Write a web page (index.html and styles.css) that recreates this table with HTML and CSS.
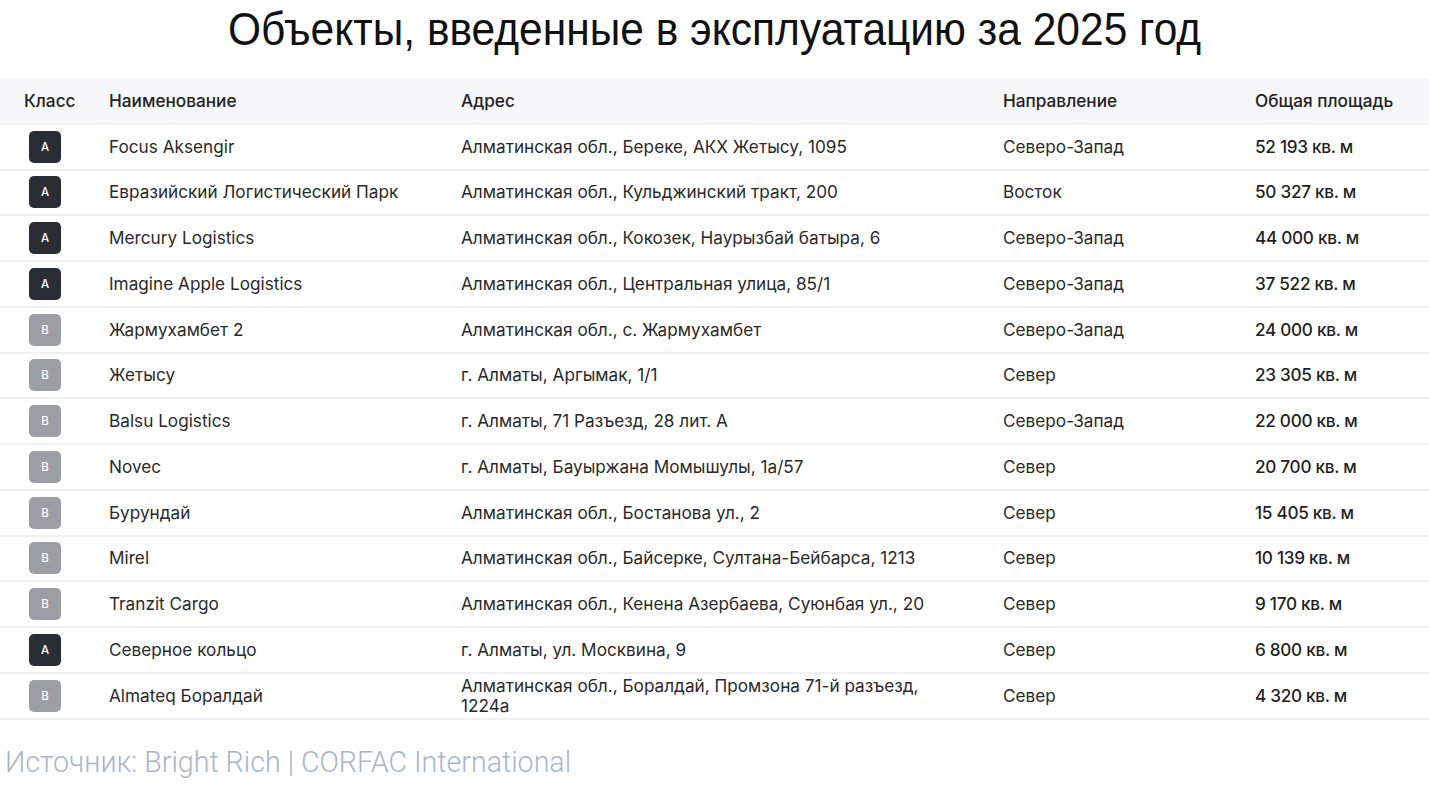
FILE: index.html
```html
<!DOCTYPE html>
<html lang="ru">
<head>
<meta charset="utf-8">
<link rel="stylesheet" href="styles.css">
</head>
<body>
<h1 class="title"><span class="title-text">Объекты, введенные в эксплуатацию за 2025 год</span></h1>
<div class="table">
  <div class="row head">
    <div class="cell">Класс</div>
    <div class="cell">Наименование</div>
    <div class="cell">Адрес</div>
    <div class="cell">Направление</div>
    <div class="cell">Общая площадь</div>
  </div>
  <div class="row">
    <div class="cell"><span class="badge a">A</span></div>
    <div class="cell">Focus Aksengir</div>
    <div class="cell">Алматинская обл., Береке, АКХ Жетысу, 1095</div>
    <div class="cell">Северо-Запад</div>
    <div class="cell area">52 193 кв. м</div>
  </div>
  <div class="row">
    <div class="cell"><span class="badge a">A</span></div>
    <div class="cell">Евразийский Логистический Парк</div>
    <div class="cell">Алматинская обл., Кульджинский тракт, 200</div>
    <div class="cell">Восток</div>
    <div class="cell area">50 327 кв. м</div>
  </div>
  <div class="row">
    <div class="cell"><span class="badge a">A</span></div>
    <div class="cell">Mercury Logistics</div>
    <div class="cell">Алматинская обл., Кокозек, Наурызбай батыра, 6</div>
    <div class="cell">Северо-Запад</div>
    <div class="cell area">44 000 кв. м</div>
  </div>
  <div class="row">
    <div class="cell"><span class="badge a">A</span></div>
    <div class="cell">Imagine Apple Logistics</div>
    <div class="cell">Алматинская обл., Центральная улица, 85/1</div>
    <div class="cell">Северо-Запад</div>
    <div class="cell area">37 522 кв. м</div>
  </div>
  <div class="row">
    <div class="cell"><span class="badge b">B</span></div>
    <div class="cell">Жармухамбет 2</div>
    <div class="cell">Алматинская обл., с. Жармухамбет</div>
    <div class="cell">Северо-Запад</div>
    <div class="cell area">24 000 кв. м</div>
  </div>
  <div class="row">
    <div class="cell"><span class="badge b">B</span></div>
    <div class="cell">Жетысу</div>
    <div class="cell">г. Алматы, Аргымак, 1/1</div>
    <div class="cell">Север</div>
    <div class="cell area">23 305 кв. м</div>
  </div>
  <div class="row">
    <div class="cell"><span class="badge b">B</span></div>
    <div class="cell">Balsu Logistics</div>
    <div class="cell">г. Алматы, 71 Разъезд, 28 лит. А</div>
    <div class="cell">Северо-Запад</div>
    <div class="cell area">22 000 кв. м</div>
  </div>
  <div class="row">
    <div class="cell"><span class="badge b">B</span></div>
    <div class="cell">Novec</div>
    <div class="cell">г. Алматы, Бауыржана Момышулы, 1а/57</div>
    <div class="cell">Север</div>
    <div class="cell area">20 700 кв. м</div>
  </div>
  <div class="row">
    <div class="cell"><span class="badge b">B</span></div>
    <div class="cell">Бурундай</div>
    <div class="cell">Алматинская обл., Бостанова ул., 2</div>
    <div class="cell">Север</div>
    <div class="cell area">15 405 кв. м</div>
  </div>
  <div class="row">
    <div class="cell"><span class="badge b">B</span></div>
    <div class="cell">Mirel</div>
    <div class="cell">Алматинская обл., Байсерке, Султана-Бейбарса, 1213</div>
    <div class="cell">Север</div>
    <div class="cell area">10 139 кв. м</div>
  </div>
  <div class="row">
    <div class="cell"><span class="badge b">B</span></div>
    <div class="cell">Tranzit Cargo</div>
    <div class="cell">Алматинская обл., Кенена Азербаева, Суюнбая ул., 20</div>
    <div class="cell">Север</div>
    <div class="cell area">9 170 кв. м</div>
  </div>
  <div class="row">
    <div class="cell"><span class="badge a">A</span></div>
    <div class="cell">Северное кольцо</div>
    <div class="cell">г. Алматы, ул. Москвина, 9</div>
    <div class="cell">Север</div>
    <div class="cell area">6 800 кв. м</div>
  </div>
  <div class="row">
    <div class="cell"><span class="badge b">B</span></div>
    <div class="cell">Almateq Боралдай</div>
    <div class="cell">Алматинская обл., Боралдай, Промзона 71-й разъезд, 1224а</div>
    <div class="cell">Север</div>
    <div class="cell area">4 320 кв. м</div>
  </div>
</div>
<p class="source">Источник: Bright Rich | CORFAC International</p>
</body>
</html>
```

FILE: styles.css
```css
* { box-sizing: border-box; }
html, body { margin: 0; padding: 0; background: #fff; }
body {
  width: 1429px;
  height: 790px;
  overflow: hidden;
  font-family: Inter, "Noto Sans", sans-serif;
  color: #2a2a2a;
}
.title {
  margin: 0;
  padding-top: 4px;
  height: 79px;
  text-align: center;
  font-family: "Liberation Sans", Arial, sans-serif;
  font-weight: 400;
  font-size: 46px;
  line-height: 50px;
  color: #111;
  white-space: nowrap;
}
.title-text {
  display: inline-block;
  transform: scaleX(0.924);
  transform-origin: center;
}
.table { width: 1429px; }
.row {
  display: grid;
  grid-template-columns: 85px 352px 542px 252px 1fr;
  align-items: center;
  height: 45.75px;
  border-bottom: 2px solid #f0f0f2;
  font-size: 17.2px;
  line-height: 20px;
}
.row.head {
  background: #f7f7f9;
  font-weight: 500;
  color: #222;
  border-bottom: 2px solid #efeff1;
}
.cell { padding: 0 24px; }
.area { font-weight: 500; color: #1f1f1f; letter-spacing: -0.3px; }
.badge {
  display: flex;
  align-items: center;
  justify-content: center;
  width: 32px;
  height: 32px;
  margin-left: 5px;
  border-radius: 5px;
  color: #fff;
  font-size: 11.5px;
  font-weight: 500;
}
.badge.a { background: #2a2d33; }
.badge.b { background: #9c9ea3; }
.source {
  margin: 24px 0 0 5px;
  font-family: Roboto, "Liberation Sans", sans-serif;
  font-weight: 300;
  font-size: 28.6px;
  line-height: 36px;
  color: #a9b5c6;
}
```
